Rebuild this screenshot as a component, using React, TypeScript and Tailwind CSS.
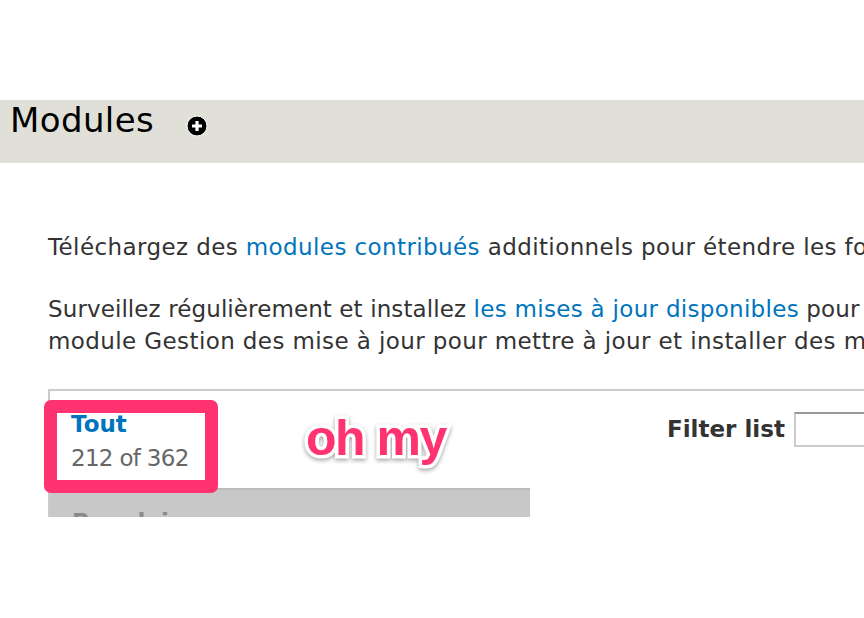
import React from "react";

export default function App() {
  return (
    <div className="relative w-[864px] h-[618px] bg-white overflow-hidden font-['DejaVu_Sans',sans-serif] text-[#333]">
      <div className="h-[100px]" />
      <div className="h-[417px] overflow-hidden">
        <div className="h-[63px] bg-[#e0e0d8] flex items-start">
          <h1 className="pl-[10px] pt-[3px] text-[34px] tracking-[0.4px] leading-none font-normal text-black">Modules</h1>
          <svg className="ml-[32px] mt-[15px] shrink-0" width="22" height="22" viewBox="0 0 22 22">
            <circle cx="11" cy="11" r="10" fill="#000" stroke="#fff" strokeWidth="1" />
            <path d="M11 6v10M6 11h10" stroke="#fff" strokeWidth="3.2" strokeLinecap="butt" />
          </svg>
        </div>
        <div className="pl-[48px] pt-[68px] text-[23px] leading-[32px] whitespace-nowrap">
          <p className="tracking-[0.4px]">
            Téléchargez des <span className="text-[#0074bd]">modules contribués</span> additionnels pour étendre les fonctionnalités de votre site.
          </p>
          <p className="mt-[30px] tracking-[0.1px]">
            Surveillez régulièrement et installez <span className="text-[#0074bd] tracking-[0.3px]">les mises à jour disponibles</span> pour maintenir un site sécurisé. Activez le
            <br />
            <span className="tracking-[0.4px]">module Gestion des mise à jour pour mettre à jour et installer des modules et des thèmes.</span>
          </p>
        </div>
        <div className="ml-[48px] mt-[32px] w-[900px] border-t-2 border-l-2 border-[#ccc] flex">
          <div className="w-[480px] shrink-0 flex flex-col">
            <div className="pl-[21px] pt-[16px] pb-[13px] bg-white leading-[34px] text-[23px]">
              <div className="font-bold text-[#0074bd]">Tout</div>
              <div className="text-[#666] tracking-[-0.7px]">212 of 362</div>
            </div>
            <div className="border-t-2 border-[#bbb] bg-[#c8c8c8] pl-[22px] pt-[15px] leading-[34px] text-[23px] font-bold text-[#8a8a8a] h-[80px]">
              Populaire
            </div>
          </div>
          <div className="pl-[137px] pt-[21px] flex items-start shrink-0">
            <div className="flex items-center gap-[9px]">
              <label className="font-bold text-[23px] leading-none text-[#333] whitespace-nowrap">Filter list</label>
              <div className="w-[200px] h-[35px] border-2 border-[#ccc] border-t-[#999] bg-white shrink-0" />
            </div>
          </div>
        </div>
      </div>

      <div className="absolute left-[44px] top-[400px] w-[174px] h-[93px] border-[13px] border-[#ff3370] rounded-[7px]" />
      <div
        className="absolute left-[306px] top-[413px] text-[50px] leading-none font-bold tracking-[-1.5px] text-[#ff3370] font-['Liberation_Sans',sans-serif] whitespace-nowrap [-webkit-text-stroke:7px_white] [paint-order:stroke_fill] drop-shadow-[0_2px_2px_rgba(0,0,0,0.35)]"
      >
        oh my
      </div>
    </div>
  );
}
